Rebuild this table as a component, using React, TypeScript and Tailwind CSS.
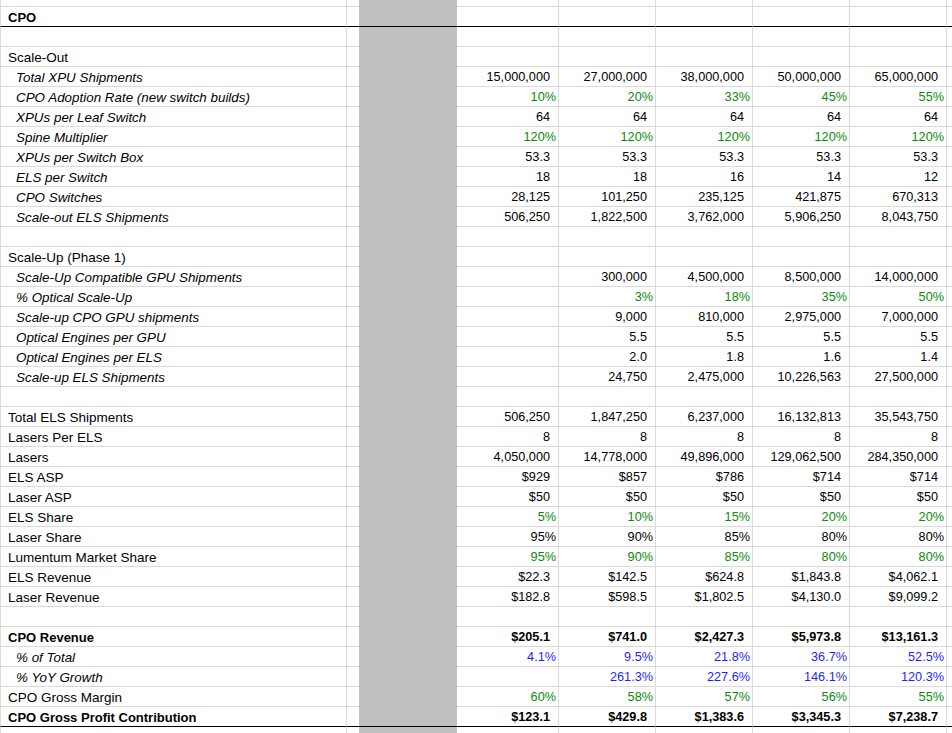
import React from 'react';

type Kind = 'blank' | 'section' | 'item' | 'plain' | 'bold' | 'title';
type Row = {
  label?: string;
  kind: Kind;
  values?: string[];
  tone?: 'green' | 'blue';
  strong?: boolean;
  rule?: boolean;
};

const rows: Row[] = [
  { kind: 'title', label: 'CPO', rule: true },
  { kind: 'blank' },
  { kind: 'section', label: 'Scale-Out' },
  { kind: 'item', label: 'Total XPU Shipments', values: ['15,000,000', '27,000,000', '38,000,000', '50,000,000', '65,000,000'] },
  { kind: 'item', label: 'CPO Adoption Rate (new switch builds)', values: ['10%', '20%', '33%', '45%', '55%'], tone: 'green' },
  { kind: 'item', label: 'XPUs per Leaf Switch', values: ['64', '64', '64', '64', '64'] },
  { kind: 'item', label: 'Spine Multiplier', values: ['120%', '120%', '120%', '120%', '120%'], tone: 'green' },
  { kind: 'item', label: 'XPUs per Switch Box', values: ['53.3', '53.3', '53.3', '53.3', '53.3'] },
  { kind: 'item', label: 'ELS per Switch', values: ['18', '18', '16', '14', '12'] },
  { kind: 'item', label: 'CPO Switches', values: ['28,125', '101,250', '235,125', '421,875', '670,313'] },
  { kind: 'item', label: 'Scale-out ELS Shipments', values: ['506,250', '1,822,500', '3,762,000', '5,906,250', '8,043,750'] },
  { kind: 'blank' },
  { kind: 'section', label: 'Scale-Up (Phase 1)' },
  { kind: 'item', label: 'Scale-Up Compatible GPU Shipments', values: ['', '300,000', '4,500,000', '8,500,000', '14,000,000'] },
  { kind: 'item', label: '% Optical Scale-Up', values: ['', '3%', '18%', '35%', '50%'], tone: 'green' },
  { kind: 'item', label: 'Scale-up CPO GPU shipments', values: ['', '9,000', '810,000', '2,975,000', '7,000,000'] },
  { kind: 'item', label: 'Optical Engines per GPU', values: ['', '5.5', '5.5', '5.5', '5.5'] },
  { kind: 'item', label: 'Optical Engines per ELS', values: ['', '2.0', '1.8', '1.6', '1.4'] },
  { kind: 'item', label: 'Scale-up ELS Shipments', values: ['', '24,750', '2,475,000', '10,226,563', '27,500,000'] },
  { kind: 'blank' },
  { kind: 'plain', label: 'Total ELS Shipments', values: ['506,250', '1,847,250', '6,237,000', '16,132,813', '35,543,750'] },
  { kind: 'plain', label: 'Lasers Per ELS', values: ['8', '8', '8', '8', '8'] },
  { kind: 'plain', label: 'Lasers', values: ['4,050,000', '14,778,000', '49,896,000', '129,062,500', '284,350,000'] },
  { kind: 'plain', label: 'ELS ASP', values: ['$929', '$857', '$786', '$714', '$714'] },
  { kind: 'plain', label: 'Laser ASP', values: ['$50', '$50', '$50', '$50', '$50'] },
  { kind: 'plain', label: 'ELS Share', values: ['5%', '10%', '15%', '20%', '20%'], tone: 'green' },
  { kind: 'plain', label: 'Laser Share', values: ['95%', '90%', '85%', '80%', '80%'] },
  { kind: 'plain', label: 'Lumentum Market Share', values: ['95%', '90%', '85%', '80%', '80%'], tone: 'green' },
  { kind: 'plain', label: 'ELS Revenue', values: ['$22.3', '$142.5', '$624.8', '$1,843.8', '$4,062.1'] },
  { kind: 'plain', label: 'Laser Revenue', values: ['$182.8', '$598.5', '$1,802.5', '$4,130.0', '$9,099.2'] },
  { kind: 'blank' },
  { kind: 'bold', label: 'CPO Revenue', values: ['$205.1', '$741.0', '$2,427.3', '$5,973.8', '$13,161.3'], strong: true },
  { kind: 'item', label: '% of Total', values: ['4.1%', '9.5%', '21.8%', '36.7%', '52.5%'], tone: 'blue' },
  { kind: 'item', label: '% YoY Growth', values: ['', '261.3%', '227.6%', '146.1%', '120.3%'], tone: 'blue' },
  { kind: 'plain', label: 'CPO Gross Margin', values: ['60%', '58%', '57%', '56%', '55%'], tone: 'green' },
  { kind: 'bold', label: 'CPO Gross Profit Contribution', values: ['$123.1', '$429.8', '$1,383.6', '$3,345.3', '$7,238.7'], strong: true, rule: true },
  { kind: 'blank' },
];

const dataWidths = ['w-[102px]', 'w-[97px]', 'w-[97px]', 'w-[97px]', 'w-[97px]'];

const labelClass = (kind: Kind) => {
  switch (kind) {
    case 'title':
    case 'bold':
      return 'pl-[7px] font-bold text-[13px]';
    case 'item':
      return 'pl-[15px] italic text-[13.4px]';
    default:
      return 'pl-[7px] text-[13.5px]';
  }
};

const SheetRow: React.FC<{ row: Row; height?: string }> = ({ row, height = 'h-[20px]' }) => {
  const line = row.rule ? 'border-black' : 'border-[#dadada]';
  const cell = `${height} border-b ${line} flex items-end leading-none pb-[2px] shrink-0`;
  const values = row.values ?? ['', '', '', '', ''];
  const tone =
    row.tone === 'green' ? 'text-[#0a8a0a]' : row.tone === 'blue' ? 'text-[#1f1fff]' : 'text-black';

  return (
    <div className="flex">
      <div className={`${cell} w-[347px] border-l border-l-[#dadada] border-r border-r-[#dadada] text-black ${labelClass(row.kind)}`}>
        <span className="whitespace-nowrap">{row.label}</span>
      </div>
      <div className={`${cell} w-[12px]`} />
      <div className={`${height} w-[98px] shrink-0 bg-[#bfbfbf] border-b ${row.rule ? 'border-black' : 'border-transparent'}`} />
      {values.map((v, i) => (
        <div
          key={i}
          className={`${cell} ${dataWidths[i]} border-r border-r-[#dadada] justify-end font-['Liberation_Sans',Arial,sans-serif] text-[12.7px] ${
            v.endsWith('%') ? 'pr-[2px]' : 'pr-[8px]'
          } ${row.strong ? 'font-bold' : ''} ${tone}`}
        >
          {v}
        </div>
      ))}
      <div className={`${cell} flex-1`} />
    </div>
  );
};

export default function App() {
  return (
    <div className="w-[952px] h-[733px] overflow-hidden bg-white font-['Liberation_Sans',Arial,sans-serif]">
      <SheetRow row={{ kind: 'blank' }} height="h-[7px]" />
      {rows.map((r, i) => (
        <SheetRow key={i} row={r} />
      ))}
    </div>
  );
}
